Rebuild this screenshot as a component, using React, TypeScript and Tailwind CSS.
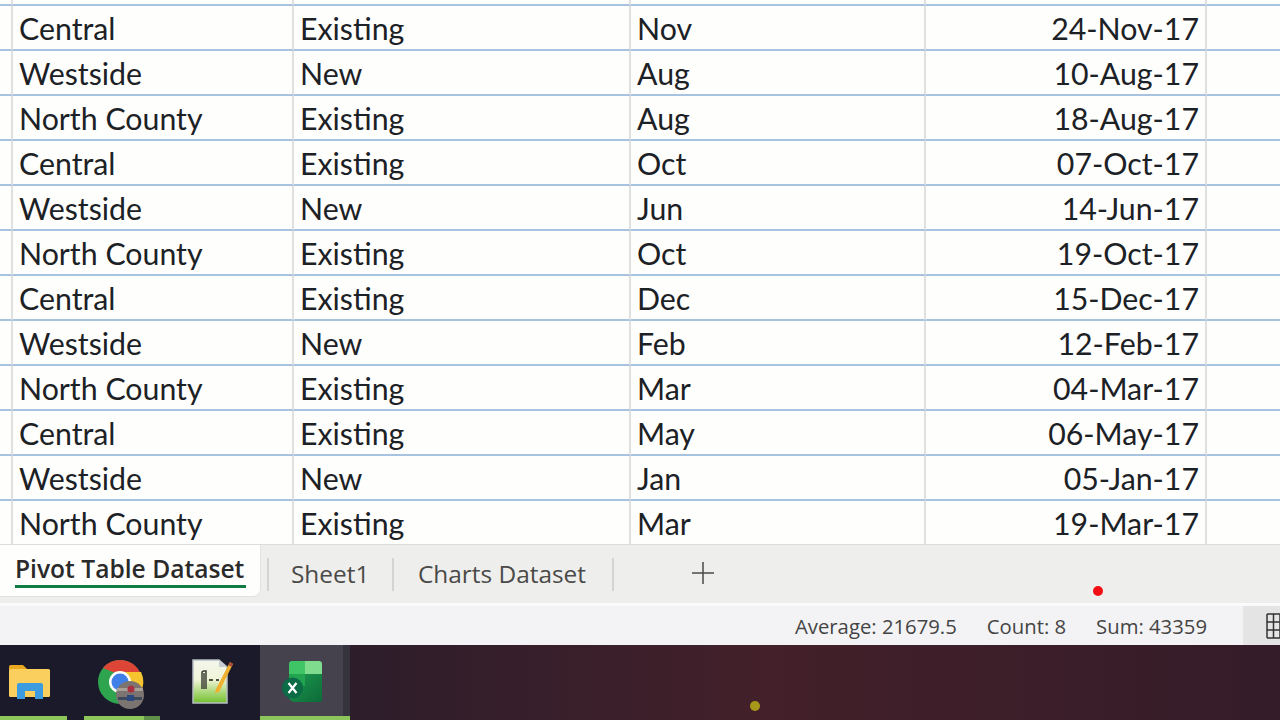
import React from "react";

const ROWS = [
  ["Central", "Existing", "Nov", "24-Nov-17"],
  ["Westside", "New", "Aug", "10-Aug-17"],
  ["North County", "Existing", "Aug", "18-Aug-17"],
  ["Central", "Existing", "Oct", "07-Oct-17"],
  ["Westside", "New", "Jun", "14-Jun-17"],
  ["North County", "Existing", "Oct", "19-Oct-17"],
  ["Central", "Existing", "Dec", "15-Dec-17"],
  ["Westside", "New", "Feb", "12-Feb-17"],
  ["North County", "Existing", "Mar", "04-Mar-17"],
  ["Central", "Existing", "May", "06-May-17"],
  ["Westside", "New", "Jan", "05-Jan-17"],
  ["North County", "Existing", "Mar", "19-Mar-17"],
];

const COLS = "grid grid-cols-[13px_281px_337px_295px_281px_1fr]";

function Row({ cells, last }: { cells: string[]; last?: boolean }) {
  const line = last ? "" : "border-b-2 border-b-[#a8c3df]";
  const cell = `border-r-2 border-r-[#dfe1e0] ${line}`;
  return (
    <div className={`${COLS} ${last ? "h-[44px]" : "h-[45px]"}`}>
      <div className={cell} />
      <div className={`${cell} pl-[6px] flex items-center`}>{cells[0]}</div>
      <div className={`${cell} pl-[6px] flex items-center`}>{cells[1]}</div>
      <div className={`${cell} pl-[6px] flex items-center`}>{cells[2]}</div>
      <div className={`${cell} pr-[6px] flex items-center justify-end`}>{cells[3]}</div>
      <div className={line} />
    </div>
  );
}

function FolderIcon() {
  return (
    <svg width="42" height="36" viewBox="0 0 42 36">
      <path d="M0 3 Q0 1 2 1 H14 L19 6 H0 Z" fill="#e9a820" />
      <rect x="0" y="5" width="41" height="28" rx="1.5" fill="#fbcf5e" />
      <path d="M8 35 V21 Q8 19 10 19 H32 Q34 19 34 21 V35 H26 V27 H16 V35 Z" fill="#3d9be0" />
    </svg>
  );
}

function ChromeIcon() {
  return (
    <svg width="50" height="50" viewBox="0 0 50 50">
      <circle cx="23" cy="23" r="22" fill="#2ea44f" />
      <path d="M23 1 A22 22 0 0 1 44 16 L23 16 L6 9 A22 22 0 0 1 23 1 Z" fill="#dd4636" />
      <path d="M23 13 H44 A22 22 0 0 1 38 40 L23 23 Z" fill="#f6c42e" />
      <circle cx="23" cy="23" r="11" fill="#ffffff" />
      <circle cx="23" cy="23" r="8.5" fill="#3f7fe8" />
      <circle cx="33" cy="36" r="14" fill="#7c7470" />
      <rect x="20" y="29" width="26" height="3" fill="#a89f96" />
      <rect x="21" y="38" width="24" height="3" fill="#3d4a5e" />
      <circle cx="34" cy="30" r="3.5" fill="#a83040" />
      <rect x="30" y="36" width="7" height="6" fill="#2c4a80" />
    </svg>
  );
}

function NotepadIcon() {
  return (
    <svg width="42" height="46" viewBox="0 0 42 46">
      <defs>
        <linearGradient id="pad" x1="0" y1="0" x2="0" y2="1">
          <stop offset="0" stopColor="#f4f6ec" />
          <stop offset="0.45" stopColor="#f0f4d8" />
          <stop offset="1" stopColor="#72c02c" />
        </linearGradient>
      </defs>
      <path d="M1 1 H27 L35 8 V44 H1 Z" fill="url(#pad)" stroke="#b8bfc4" strokeWidth="1.5" />
      <path d="M27 1 V8 H35 Z" fill="#c9ced2" />
      <path d="M10 30 V14 Q10 12 12 12 H14 V30 M12 14 V30" fill="none" stroke="#3b3f36" strokeWidth="1.5" />
      <path d="M17 21 H21 M24 21 H27" stroke="#4a4f40" strokeWidth="2" />
      <path d="M38 3 L41 5 L27 33 L23 34 L24 30 Z" fill="#eeb02e" />
      <path d="M38 3 L41 5 L39.5 8 L36.5 6 Z" fill="#a84a3a" />
    </svg>
  );
}

function ExcelIcon() {
  return (
    <svg width="42" height="44" viewBox="0 0 42 44">
      <defs>
        <linearGradient id="xl" x1="0" y1="0" x2="1" y2="1">
          <stop offset="0" stopColor="#1c9a4e" />
          <stop offset="1" stopColor="#0d6a38" />
        </linearGradient>
      </defs>
      <path d="M7 4 Q7 1 10 1 H23 V14 H7 Z" fill="#3fc566" />
      <path d="M23 1 H37 Q40 1 40 4 V14 H23 Z" fill="#7fdc8e" />
      <path d="M7 14 H23 V26 H7 Z" fill="#22a350" />
      <path d="M23 14 H40 V40 Q40 42 37 42 H14 Q7 42 7 36 V26 H23 Z" fill="url(#xl)" />
      <circle cx="10.5" cy="28" r="10.5" fill="#0c6b47" />
      <path d="M6.5 23 L14.5 33 M14.5 23 L6.5 33" stroke="#ffffff" strokeWidth="2.2" />
    </svg>
  );
}

export default function App() {
  return (
    <div className="relative w-[1280px] h-[720px] overflow-hidden flex flex-col bg-[#fefefc]">
      {/* sheet grid */}
      <div className="h-[544px] overflow-hidden font-['Lato','Liberation_Sans',sans-serif] text-[30.3px] leading-[36px] text-[#1c2126]">
        <div className={`${COLS} h-[6px]`}>
          {[0, 1, 2, 3, 4].map((i) => (
            <div key={i} className="border-r-2 border-r-[#dfe1e0] border-b-2 border-b-[#a8c3df]" />
          ))}
          <div className="border-b-2 border-b-[#a8c3df]" />
        </div>
        {ROWS.map((r, i) => (
          <Row key={i} cells={r} last={i === ROWS.length - 1} />
        ))}
      </div>

      {/* sheet tabs */}
      <div className="h-[62px] bg-[#eeeeec] border-t border-t-[#dcdcda] flex items-start font-['Open_Sans','Liberation_Sans',sans-serif] text-[#4a4a48] text-[24.4px] border-b-[3px] border-b-[#fafafa]">
        <div className="w-[261px] h-[52px] bg-[#fefefc] rounded-br-[8px] border-r border-b border-[#e2e2e0] pl-[15px] shrink-0">
          <div className="w-[231px] h-[43px] border-b-[3px] border-b-[#107c41] text-[24.6px] font-semibold text-[#2a2a2a] whitespace-nowrap leading-[47px]">
            Pivot Table Dataset
          </div>
        </div>
        <div className="flex items-center h-[58px]">
          <div className="w-[2px] h-[33px] bg-[#d4d4d2] ml-[6px]" />
          <div className="w-[123px] pl-[22px] whitespace-nowrap">Sheet1</div>
          <div className="w-[2px] h-[33px] bg-[#d4d4d2]" />
          <div className="w-[218px] pl-[24px] whitespace-nowrap">Charts Dataset</div>
          <div className="w-[2px] h-[33px] bg-[#d4d4d2]" />
          <svg width="22" height="22" viewBox="0 0 22 22" className="ml-[78px] -mt-[2px]">
            <path d="M11 0 V22 M0 11 H22" stroke="#4a4a48" strokeWidth="1.5" />
          </svg>
        </div>
      </div>

      {/* status bar */}
      <div className="h-[39px] bg-[#f3f3f5] flex items-center justify-end font-['Open_Sans','Liberation_Sans',sans-serif] text-[20.3px] text-[#444444] whitespace-nowrap">
        <span className="mr-[30px] pt-[1px]">Average: 21679.5</span>
        <span className="mr-[30px] pt-[1px]">Count: 8</span>
        <span className="mr-[36px] pt-[1px]">Sum: 43359</span>
        <div className="w-[37px] h-full bg-[#e4e4e4] flex items-center justify-end overflow-hidden">
          <svg width="14" height="26" viewBox="0 0 14 26">
            <path d="M1 1 H14 M1 9 H14 M1 17 H14 M1 25 H14 M1 1 V25 M7.5 1 V25 M14 1 V25" fill="none" stroke="#333333" strokeWidth="1.5" />
          </svg>
        </div>
      </div>

      {/* taskbar */}
      <div className="flex-1 flex bg-gradient-to-r from-[#1a1a2a] via-[#43202a] via-60% to-[#341c28]">
        <div className="w-[350px] flex bg-[#1a1a2a] shrink-0">
          <div className="w-[68px] relative flex items-center justify-center pr-[8px] pb-[1px]">
            <FolderIcon />
            <div className="absolute left-0 bottom-0 w-[67px] h-[4px] bg-[#8cc65a]" />
          </div>
          <div className="w-[92px] relative flex items-center justify-center pl-[16px] pt-[3px]">
            <ChromeIcon />
            <div className="absolute left-[16px] bottom-0 w-[60px] h-[4px] bg-[#8cc65a]" />
            <div className="absolute left-[76px] bottom-0 w-[16px] h-[4px] bg-[#5f9148]" />
          </div>
          <div className="w-[100px] flex items-center pl-[32px] pb-[1px]">
            <NotepadIcon />
          </div>
          <div className="w-[90px] relative bg-[#45424e] flex items-center pl-[22px] pb-[1px]">
            <ExcelIcon />
            <div className="absolute left-[83px] top-0 bottom-0 w-[7px] bg-[#35333d]" />
            <div className="absolute left-0 bottom-0 w-[90px] h-[4px] bg-[#8cc65a]" />
          </div>
        </div>
        <div className="flex-1" />
      </div>

      {/* recording pointer dots */}
      <div className="absolute left-[1093px] top-[586px] w-[10px] h-[10px] rounded-full bg-[#f50d14]" />
      <div className="absolute left-[750px] top-[701px] w-[10px] h-[10px] rounded-full bg-[#a8981a]" />
    </div>
  );
}
